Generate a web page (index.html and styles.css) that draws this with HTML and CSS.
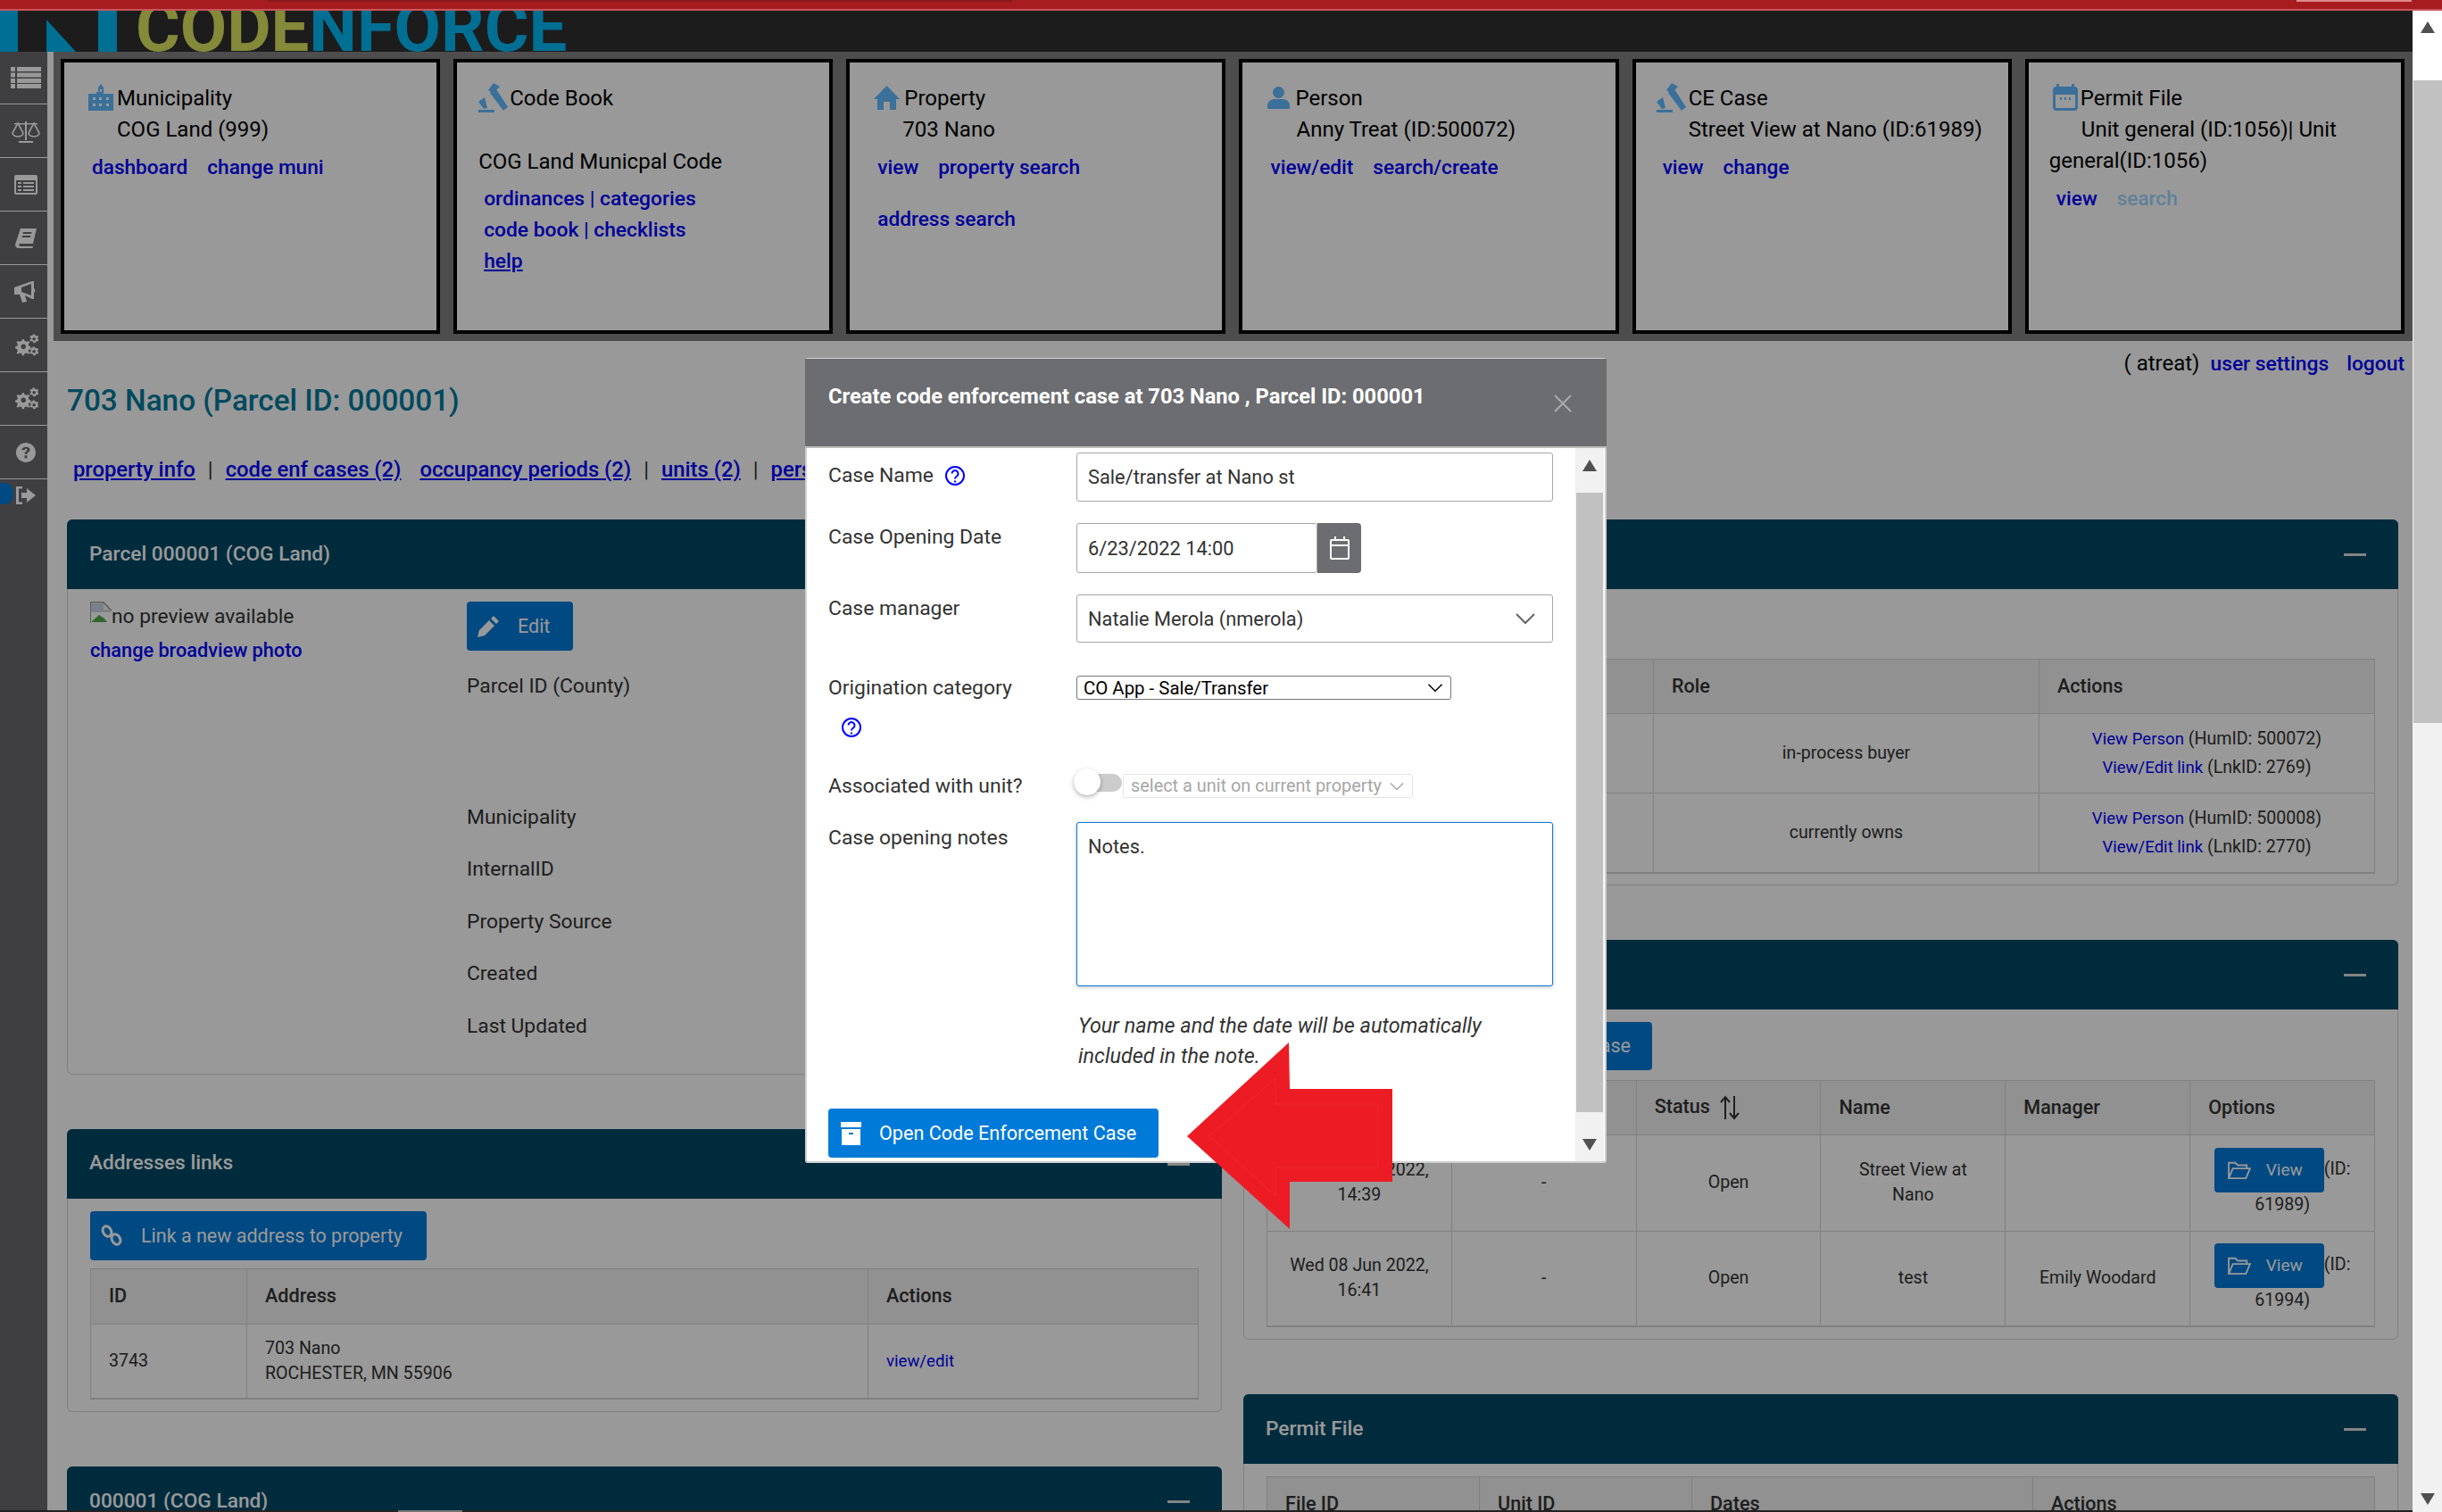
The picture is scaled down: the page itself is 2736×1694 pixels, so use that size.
FILE: index.html
```html
<!DOCTYPE html>
<html lang="en">
<head>
<meta charset="utf-8">
<title>codeNforce</title>
<link rel="stylesheet" href="styles.css">
</head>
<body>
<svg class="defs" width="0" height="0" aria-hidden="true">
  <symbol id="gavel" viewBox="0 0 33 33"><path d="M17 0l7 4-8 8-5-4zM13 11l7-4 13 20-5 4zM0 21l7-5 3 12-4 1zM0 30h18v3H0z"/></symbol>
  <symbol id="cogs" viewBox="0 0 40 36"><path d="M15 8l2 0 1 3 3 1 3-1 2 2-2 3 1 3 3 1v3l-3 1-1 3 2 3-2 2-3-2-3 1-1 3h-3l-1-3-3-1-3 2-2-2 2-3-1-3-3-1v-3l3-1 1-3-2-3 2-2 3 1 3-1zM16 16a4 4 0 1 0 .1 0z" fill-rule="evenodd"/><path d="M31 0h3l1 2 2 1 2-1 1 2-1 2v2l2 1-1 3-2-1-2 1-1 2h-3l-1-2-2-1-2 1-1-3 2-1V6l-2-2 2-2 2 1zM33 5a2.500 2.500 0 1 0 .1 0zM31 20h3l1 2 2 1 2-1 1 2-1 2v2l2 1-1 3-2-1-2 1-1 2h-3l-1-2-2-1-2 1-1-3 2-1v-2l-2-2 2-2 2 1zM33 25a2.500 2.500 0 1 0 .1 0z" fill-rule="evenodd"/></symbol>
  <symbol id="help" viewBox="0 0 24 24"><circle cx="12" cy="12" r="10" fill="none" stroke="currentColor" stroke-width="2"/><path d="M8.500 9.500a3.500 3.500 0 1 1 5.500 3c-1.300.9-2 1.500-2 3M12 17.500v2" fill="none" stroke="currentColor" stroke-width="2"/></symbol>
  <symbol id="folder" viewBox="0 0 30 24"><path d="M2 22V3h8l3 3h11v4M2 22l5-12h21l-5 12z" fill="none" stroke="currentColor" stroke-width="2"/></symbol>
  <symbol id="chev" viewBox="0 0 24 14"><path d="M2 2l10 10L22 2" fill="none" stroke="currentColor" stroke-width="2"/></symbol>
</svg>
<div class="redbar"><span class="red-tab"></span><span class="red-pale"></span></div>
<div class="frame">
  <div class="page">
    <header class="brand">
      <svg class="mark" width="132" height="46" viewBox="0 0 132 46"><path d="M0 0h20v46H0zM52 10l33 36H52zM110 0h21v46h-21z"/></svg>
      <span class="logotext"><span class="olive">CODE</span><span class="blue">NFORCE</span></span>
    </header>
    <div class="layout">
      <nav class="sidebar">
        <div class="side-item"><svg width="34" height="24" viewBox="0 0 34 24"><path d="M0 0h5v5H0zM7 0h27v5H7zM0 6.500h5v5H0zM7 6.500h27v5H7zM0 13h5v5H0zM7 13h27v5H7zM0 19h5v5H0zM7 19h27v5H7z"/></svg></div>
        <div class="side-item"><svg width="32" height="26" viewBox="0 0 32 26"><path d="M15 2h2v21h-2zM8 24h16v2H8zM3 4h26v1.500H3z"/><path d="M7 4L1 15a6 4 0 0 0 12 0zM25 4l-6 11a6 4 0 0 0 12 0z" fill="none" stroke="currentColor" stroke-width="1.600"/></svg></div>
        <div class="side-item"><svg width="26" height="22" viewBox="0 0 26 22"><path d="M2 0h22a2 2 0 0 1 2 2v18a2 2 0 0 1-2 2H2a2 2 0 0 1-2-2V2a2 2 0 0 1 2-2zM2 6v14h22V6zM4 8h4v2H4zM10 8h12v2H10zM4 12h4v2H4zM10 12h12v2H10zM4 16h4v2H4zM10 16h12v2H10z" fill-rule="evenodd"/></svg></div>
        <div class="side-item"><svg width="24" height="22" viewBox="0 0 24 22"><path d="M6 0h18l-4 17H5a2 2 0 0 0 0 3h15l-.5 2H4c-3 0-4-2-4-4zM9 4l-.5 2H18l.5-2zM8 8l-.5 2H17l.5-2z" fill-rule="evenodd"/></svg></div>
        <div class="side-item"><svg width="26" height="24" viewBox="0 0 26 24"><path d="M0 7l20-7h2v8a3 3 0 0 1 0 5v7h-2L12 16l2 7-5 1-3-9H0zM19 3L8 7v5l11 4z" fill-rule="evenodd"/></svg></div>
        <div class="side-item"><svg width="28" height="26"><use href="#cogs"/></svg></div>
        <div class="side-item"><svg width="28" height="26"><use href="#cogs"/></svg></div>
        <div class="side-item"><svg width="22" height="22" viewBox="0 0 24 24"><path d="M12 0a12 12 0 1 1-.1 0zM7 9h3.500c0-2 3-2 3-.3 0 1.700-3 2-3 5.300h3c0-2.500 3.500-2.500 3.500-5.500C17 4 7 4 7 9zM10.500 15.500v3.500h3v-3.500z" fill-rule="evenodd"/></svg></div>
        <div class="side-item side-last"><span class="pill"></span><svg width="22" height="20" viewBox="0 0 22 20"><path d="M7 0v2.500H3v15h4V20H0V0zM12 2l10 8-10 8v-5H6V7h6z"/></svg></div>
      </nav>
      <main class="main">
        <section class="nav-strip">
          <article class="card c1">
            <div class="card-head"><svg class="ci" width="28" height="30" viewBox="0 0 28 30"><path d="M9 9h2V4l3-4 3 4v7h11v19H0V11h9zM5 15v3h3v-3zM12 15v3h3v-3zM20 15v3h3v-3zM5 22v3h3v-3zM12 22v3h3v-3zM20 22v3h3v-3zM13 6v3h2V6z" fill-rule="evenodd"/></svg>Municipality</div>
            <p class="indent-32">COG Land (999)</p>
            <p class="links"><a href="#">dashboard</a><a href="#">change muni</a></p>
          </article>
          <article class="card c2">
            <div class="card-head"><svg class="ci" width="33" height="33"><use href="#gavel"/></svg>Code Book</div>
            <p class="c2-title">COG Land Municpal Code</p>
            <p class="stack"><a href="#">ordinances | categories</a><a href="#">code book | checklists</a><a href="#" class="under">help</a></p>
          </article>
          <article class="card c3">
            <div class="card-head"><svg class="ci" width="29" height="27" viewBox="0 0 29 27"><path d="M14.500 0L29 15h-4v12h-7v-9h-7v9H4V15H0z"/></svg>Property</div>
            <p class="indent-32">703 Nano</p>
            <p class="links"><a href="#">view</a><a href="#">property search</a></p>
            <p class="links links-far"><a href="#">address search</a></p>
          </article>
          <article class="card c4">
            <div class="card-head"><svg class="ci" width="25" height="25" viewBox="0 0 25 25"><ellipse cx="12.500" cy="6.500" rx="6.500" ry="6.500"/><path d="M0 25v-4c0-4 4-7 8-7h9c4 0 8 3 8 7v4z"/></svg>Person</div>
            <p class="indent-32">Anny Treat (ID:500072)</p>
            <p class="links"><a href="#">view/edit</a><a href="#">search/create</a></p>
          </article>
          <article class="card c5">
            <div class="card-head"><svg class="ci" width="33" height="33"><use href="#gavel"/></svg>CE Case</div>
            <p class="indent-32">Street View at Nano (ID:61989)</p>
            <p class="links"><a href="#">view</a><a href="#">change</a></p>
          </article>
          <article class="card c6">
            <div class="card-head"><svg class="ci" width="28" height="30" viewBox="0 0 28 30"><path d="M4 0h3v3h14V0h3v3a4 4 0 0 1 4 4v19a4 4 0 0 1-4 4H4a4 4 0 0 1-4-4V7a4 4 0 0 1 4-4zM3 12v14a1 1 0 0 0 1 1h20a1 1 0 0 0 1-1V12zM8 15h2v3H8zM13 15h2v3h-2zM18 15h2v3h-2z" fill-rule="evenodd"/></svg>Permit File</div>
            <p class="wrap-indent">Unit general (ID:1056)| Unit general(ID:1056)</p>
            <p class="links"><a href="#">view</a><a href="#" class="faded">search</a></p>
          </article>
        </section>
        <div class="content">
          <p class="userline">( atreat)<a href="#">user settings</a><a href="#">logout</a></p>
          <h1 class="title">703 Nano (Parcel ID: 000001)</h1>
          <p class="tabs"><a href="#">property info</a><span>|</span><a href="#">code enf cases (2)</a><a href="#" class="tab-tight">occupancy periods (2)</a><span>|</span><a href="#">units (2)</a><span>|</span><a href="#">persons</a></p>
          <div class="columns">
            <div class="col">
              <section class="panel">
                <header class="panel-head"><span>Parcel 000001 (COG Land)</span></header>
                <div class="panel-body parcel">
                  <div class="parcel-photo">
                    <p class="alt"><svg width="24" height="24" viewBox="0 0 24 24"><path d="M0 0h15l9 9v3H0z" fill="#d8d8d8"/><path d="M15 0v9h9z" fill="#f4f4f4"/><path d="M0 0h15l9 9-1 1-9-9H1v23H0z" fill="#9a9a9a"/><path d="M2 22l8-7 6 4 3 4H2z" fill="#58a84a"/><path d="M2 3h10v8H2z" fill="#c5d8f0"/></svg>no preview available</p>
                    <a href="#" class="link-med">change broadview photo</a>
                  </div>
                  <div class="parcel-info">
                    <a href="#" class="btn btn-edit"><svg width="24" height="24" viewBox="0 0 24 24"><path d="M18 0l6 6-3 3-6-6zM13 5l6 6L8 22l-8 2 2-8z" fill="currentColor"/></svg>Edit</a>
                    <p class="field field-tall">Parcel ID (County)</p>
                    <p class="field">Municipality</p>
                    <p class="field">InternalID</p>
                    <p class="field">Property Source</p>
                    <p class="field">Created</p>
                    <p class="field">Last Updated</p>
                  </div>
                </div>
              </section>
              <section class="panel">
                <header class="panel-head"><span>Addresses links</span><i class="minus"></i></header>
                <div class="panel-body addr">
                  <a href="#" class="btn btn-link"><svg width="24" height="24" viewBox="0 0 24 24"><ellipse cx="7" cy="7.500" rx="4.500" ry="6" transform="rotate(-30 7 7.500)" fill="none" stroke="currentColor" stroke-width="3"/><ellipse cx="17" cy="16.500" rx="4.500" ry="6" transform="rotate(-30 17 16.500)" fill="none" stroke="currentColor" stroke-width="3"/></svg>Link a new address to property</a>
                  <table class="tbl tbl-addr">
                    <thead><tr><th class="w175">ID</th><th class="w696">Address</th><th>Actions</th></tr></thead>
                    <tbody><tr class="h84"><td>3743</td><td>703 Nano<br>ROCHESTER, MN 55906</td><td><a href="#">view/edit</a></td></tr></tbody>
                  </table>
                </div>
              </section>
              <section class="panel">
                <header class="panel-head"><span>000001 (COG Land)</span><i class="minus"></i></header>
              </section>
            </div>
            <div class="col">
              <section class="panel">
                <header class="panel-head"><span></span><i class="minus"></i></header>
                <div class="panel-body persons">
                  <table class="tbl tbl-persons">
                    <thead><tr><th class="w433"></th><th class="w432">Role</th><th>Actions</th></tr></thead>
                    <tbody>
                      <tr class="h89"><td></td><td class="center">in-process buyer</td><td class="center"><a href="#">View Person</a> (HumID: 500072)<br><a href="#">View/Edit link</a> (LnkID: 2769)</td></tr>
                      <tr class="h89"><td></td><td class="center">currently owns</td><td class="center"><a href="#">View Person</a> (HumID: 500008)<br><a href="#">View/Edit link</a> (LnkID: 2770)</td></tr>
                    </tbody>
                  </table>
                </div>
              </section>
              <section class="panel">
                <header class="panel-head"><span></span><i class="minus"></i></header>
                <div class="panel-body cases">
                  <a href="#" class="btn btn-case">Open new case</a>
                  <table class="tbl tbl-cases">
                    <thead><tr><th></th><th></th><th>Status <svg class="sort" width="26" height="28" viewBox="0 0 26 28"><path d="M8 27V3M3 8l5-6 5 6M18 1v24M13 20l5 6 5-6" fill="none" stroke="currentColor" stroke-width="2"/></svg></th><th>Name</th><th>Manager</th><th>Options</th></tr></thead>
                    <tbody>
                      <tr class="h108"><td class="center">Wed 22 Jun 2022,<br>14:39</td><td class="center">-</td><td class="center">Open</td><td class="center">Street View at<br>Nano</td><td></td><td class="center opt"><a href="#" class="btn btn-view"><svg width="28" height="22"><use href="#folder"/></svg>View</a>(ID: 61989)</td></tr>
                      <tr class="h107"><td class="center">Wed 08 Jun 2022,<br>16:41</td><td class="center">-</td><td class="center">Open</td><td class="center">test</td><td class="center">Emily Woodard</td><td class="center opt"><a href="#" class="btn btn-view"><svg width="28" height="22"><use href="#folder"/></svg>View</a>(ID: 61994)</td></tr>
                    </tbody>
                  </table>
                </div>
              </section>
              <section class="panel">
                <header class="panel-head"><span>Permit File</span><i class="minus"></i></header>
                <div class="panel-body permits">
                  <table class="tbl tbl-permits">
                    <thead><tr><th class="w238">File ID</th><th class="w238">Unit ID</th><th class="w382">Dates</th><th>Actions</th></tr></thead>
                  </table>
                </div>
              </section>
            </div>
          </div>
        </div>
      </main>
    </div>
    <div class="dim"></div>
    <div class="hbar"><span></span></div>
    <section class="modal">
      <header class="modal-head">
        <h2>Create code enforcement case at 703 Nano , Parcel ID: 000001</h2>
        <svg class="close" width="20" height="20" viewBox="0 0 20 20"><path d="M1 1l18 18M19 1L1 19" stroke="currentColor" stroke-width="2"/></svg>
      </header>
      <div class="modal-body">
        <form class="form">
          <div class="row r-name"><label class="lab lab-pad">Case Name <svg class="q q-inline" width="24" height="24"><use href="#help"/></svg></label><input class="inp inp-full" value="Sale/transfer at Nano st"></div>
          <div class="row r-date"><label class="lab lab-up">Case Opening Date</label><input class="inp inp-date" value="6/23/2022 14:00"><span class="cal"><svg width="22" height="26" viewBox="0 0 22 26"><path d="M6 0v5M16 0v5M2 4h18a1 1 0 0 1 1 1v19a1 1 0 0 1-1 1H2a1 1 0 0 1-1-1V5a1 1 0 0 1 1-1zM1 10h20" fill="none" stroke="currentColor" stroke-width="2"/></svg></span></div>
          <div class="row r-mgr"><label class="lab lab-up">Case manager</label><div class="fake-select">Natalie Merola (nmerola)<svg width="24" height="14"><use href="#chev"/></svg></div></div>
          <div class="row r-orig"><label class="lab">Origination category<svg class="q q-block" width="24" height="24"><use href="#help"/></svg></label><div class="sel-wrap"><select class="sel"><option>CO App - Sale/Transfer</option></select><svg class="sel-chev" width="18" height="11"><use href="#chev"/></svg></div></div>
          <div class="row r-unit"><label class="lab">Associated with unit?</label><span class="toggle"><i></i></span><div class="unit-select">select a unit on current property<svg width="18" height="10"><use href="#chev"/></svg></div></div>
          <div class="row r-notes"><label class="lab">Case opening notes</label><textarea class="inp notes">Notes.</textarea></div>
          <p class="note">Your name and the date will be automatically<br>included in the note.</p>
          <a href="#" class="btn btn-open"><svg width="23" height="26" viewBox="0 0 23 26"><path d="M0 0h23v6H0zM1 8h21v18H1zM9 12v2h5v-2z" fill-rule="evenodd"/></svg>Open Code Enforcement Case</a>
        </form>
        <div class="mscroll"><span class="tri up"></span><span class="mthumb"></span><span class="tri down"></span></div>
      </div>
    </section>
    <svg class="arrow" width="232" height="209" viewBox="0 0 232 209"><path d="M0 105L114 0l1 52h115v104H115v53z" fill="#ed1c24"/><path d="M25 105L99 40v29h115v71H99v32z" fill="none" stroke="#f0262e" stroke-width="1"/></svg>
  </div>
  <aside class="vscroll"><span class="tri up"></span><span class="vthumb"></span><span class="tri down"></span></aside>
</div>
</body>
</html>
```
FILE: styles.css
```css
* { box-sizing: border-box; }
html, body { margin: 0; height: 100%; }
body { width: 2736px; height: 1694px; overflow: hidden; background: #fff; color: #333; font: 400 24px/35px Roboto, "Liberation Sans", sans-serif; }
p, h1, h2 { margin: 0; }
a { color: #00f; text-decoration: none; }
.defs { position: absolute; }
.redbar { position: relative; height: 12px; background: #a61c1f; border-bottom: 2px solid #c9555a; }
.red-tab { position: absolute; left: 300px; top: 0; width: 834px; height: 2px; background: #8a1a1c; }
.red-pale { position: absolute; left: 2573px; top: 0; width: 129px; height: 2px; background: #e08a8a; }
.frame { display: flex; height: 1682px; }
.page { position: relative; width: 2703px; height: 1682px; overflow: hidden; }
.brand { position: relative; height: 46px; background: #2f2f2f; overflow: hidden; display: flex; }
.mark { fill: #00b9f7; flex: none; }
.logotext { margin: -4px 0 0 20px; font: 700 76px/46px Roboto, sans-serif; white-space: nowrap; }
.olive { color: #dce65f; }
.blue { color: #00b9f7; }
.layout { display: flex; height: 1636px; }
.sidebar { width: 53px; flex: none; background: #69696d; color: #fff; fill: #fff; }
.side-item { position: relative; height: 60px; display: flex; align-items: center; justify-content: center; border-bottom: 1px solid #fff; padding-left: 4px; }
.side-item:first-child { height: 59px; }
.side-last { border-bottom: 0; height: 36px; }
.pill { position: absolute; left: 0; top: 4px; width: 15px; height: 24px; border-radius: 0 10px 10px 0; background: #007ad9; }
.main { flex: 1; min-width: 0; }
.nav-strip { margin-left: 7px; height: 324px; background: #808080; padding: 8px 9px 8px 8px; display: grid; grid-template-columns: repeat(6, 1fr); gap: 15px; }
.card { border: 4px solid #000; background: #fff; color: #000; padding-top: 23px; min-width: 0; }
.c1 { padding-left: 27px; } .c2 { padding-left: 24px; } .c3 { padding-left: 27px; } .c4 { padding-left: 28px; } .c5 { padding-left: 23px; } .c6 { padding-left: 27px; }
.card-head { display: flex; align-items: center; height: 35px; gap: 3px; }
.c2 .card-head { gap: 2px; }
.c1 .card-head { gap: 4px; }
.c3 .card-head { gap: 5px; }
.c4 .card-head { gap: 6px; }
.ci { fill: #61bbff; flex: none; margin-top: -3px; }
.indent-32 { padding-left: 32px; }
.c5 .indent-32 { padding-left: 36px; }
.c2-title { margin-top: 36px; }
.links { margin: 7px 0 0 4px; font-weight: 500; font-size: 22.600px; display: flex; gap: 22px; }
.links-far { margin-top: 23px; }
.c4 .links { margin-left: 3px; }
.c5 .links { margin-left: 7px; }
.stack { margin: 6px 0 0 6px; font-weight: 500; font-size: 22.800px; display: flex; flex-direction: column; }
.under { text-decoration: underline; }
.wrap-indent { text-indent: 36px; margin-left: -4px; width: 350px; }
.faded { color: #9fd7ff; }
.content { padding: 7px 16px 0 22px; }
.userline { display: flex; justify-content: flex-end; gap: 12px; margin: 1px -7px 0 0; color: #000; height: 35px; }
.userline a { font-weight: 500; font-size: 22.800px; }
.userline a:last-child { margin-left: 8px; }
.title { font: 500 33.300px/48px Roboto, sans-serif; color: #007b9d; }
.tabs { margin: 36px 0 0 7px; display: flex; height: 38px; gap: 14px; font-weight: 500; font-size: 23.800px; color: #333; }
.tabs a { text-decoration: underline; }
.tabs span { font-weight: 400; }
.tab-tight { margin-left: 7px; }
.columns { display: grid; grid-template-columns: 1294px 1294px; gap: 24px; margin-top: 35px; }
.col { display: flex; flex-direction: column; gap: 61px; min-width: 0; }
.panel { border: 1px solid #d5d5d5; border-radius: 6px; font-size: 22.800px; }
.panel-head { height: 78px; margin: -1px -1px 0; background: #004866; border-radius: 6px 6px 0 0; color: #fff; font-size: 22.700px; font-weight: 500; display: flex; align-items: center; justify-content: space-between; padding: 0 35px 2px 25px; position: relative; }
.minus { position: absolute; right: 36px; top: 38px; width: 25px; height: 3px; background: #ddd; }
.panel-body { padding: 0 25px; }
.parcel { display: flex; padding-bottom: 13px; }
.parcel-photo { width: 422px; flex: none; padding-top: 8px; }
.alt { display: flex; height: 38px; align-items: flex-end; line-height: 30px; }
.alt svg { flex: none; margin-bottom: 8px; }
.link-med { display: block; font-weight: 500; margin-top: 5px; font-size: 21.700px; }
.parcel-info { padding-top: 14px; }
.btn { display: inline-flex; align-items: center; background: #007ad9; color: #fff; border-radius: 4px; }
.btn-edit { display: flex; width: 119px; height: 55px; padding-left: 12px; gap: 21px; font-size: 21.500px; }
.field { height: 58.400px; line-height: 35px; }
.field-tall { margin-top: 22px; height: 147px; }
.addr { padding: 14px 25px 13px; }
.btn-link { display: flex; width: 377px; height: 55px; padding-left: 12px; gap: 21px; font-size: 21.500px; white-space: nowrap; }
.tbl { border-collapse: collapse; table-layout: fixed; width: 100%; font-size: 19.600px; line-height: 28px; border-bottom: 2px solid #d5d5d5; }
.tbl th, .tbl td { border: 1px solid #d5d5d5; padding: 0 20px; text-align: left; }
.tbl th { height: 61px; background: #f2f2f2; font-size: 21.600px; font-weight: 500; color: #333; }
.tbl td a { color: #00f; font-size: 18.600px; }
.tbl-addr { margin-top: 9px; }
.tbl-addr th { height: 62px; }
.tbl-persons td { line-height: 32px; }
.center { text-align: center !important; }
.w175 { width: 175px; } .w696 { width: 696px; } .w433 { width: 433px; } .w432 { width: 432px; } .w238 { width: 238px; } .w382 { width: 382px; }
.h84 { height: 84px; } .h89 { height: 89px; } .h108 { height: 108px; } .h107 { height: 107px; }
.persons { padding: 78px 25px 12px; }
.cases { padding: 14px 25px 13px; }
.btn-case { display: flex; width: 432px; height: 54px; justify-content: flex-end; padding-right: 24px; font-size: 21.500px; }
.tbl-cases { margin-top: 11px; }
.tbl-cases td { padding: 0 14px; }
.opt { padding: 0 14px !important; }
.sort { vertical-align: middle; margin-left: 4px; }
.tbl td a.btn-view { width: 123px; height: 50px; padding-left: 14px; gap: 16px; vertical-align: middle; color: #fff; font-size: 19px; }
.permits { padding: 14px 25px 0; }
.dim { position: absolute; inset: 0; background: rgba(0, 0, 0, .4); }
.hbar { position: absolute; left: 0; right: 0; bottom: 0; height: 2px; background: #222; }
.hbar span { position: absolute; left: 446px; width: 72px; height: 2px; background: #777; }
.modal { position: absolute; left: 902px; top: 389px; width: 898px; height: 902px; border: 2px solid #cfcfcf; border-radius: 3px; background: #fff; color: #333; }
.modal-head { height: 100px; margin: -1px -2px 0; background: #6c6d71; border-bottom: 2px solid #bdbdbd; position: relative; color: #fff; padding: 25px 26px 0; }
.modal-head h2 { font: 700 23.700px/35px Roboto, sans-serif; }
.close { position: absolute; right: 39px; top: 40px; color: #ababab; }
.modal-body { display: flex; height: 799px; }
.form { flex: 1; min-width: 0; padding: 5px 25px 0 24px; font-size: 22.900px; }
.row { display: flex; align-items: flex-start; }
.lab { width: 278px; flex: none; color: #333; }
.lab-pad { padding-top: 8px; display: flex; align-items: center; gap: 12px; }
.lab-up { margin-top: -2px; }
.r-date { margin-top: 24px; }
.r-mgr { margin-top: 24px; }
.r-orig { margin-top: 33px; height: 108px; }
.r-unit { height: 33px; }
.r-unit .lab { padding-top: 2px; }
.r-notes { margin-top: 27px; }
.inp { border: 1px solid #a6a6a6; border-radius: 3px; font: 400 21.800px/30px Roboto, sans-serif; color: #333; padding: 0 12px; background: #fff; margin: 0; outline: 0; }
.inp-full { width: 534px; height: 55px; }
.inp-date { width: 270px; height: 56px; }
.cal { width: 49px; height: 56px; background: #6c6d71; color: #fff; border-radius: 0 4px 4px 0; display: flex; align-items: center; justify-content: center; }
.fake-select { width: 534px; height: 54px; border: 1px solid #a6a6a6; border-radius: 3px; font-size: 21.800px; display: flex; align-items: center; justify-content: space-between; padding: 0 18px 0 12px; }
.fake-select svg { color: #666; }
.q { color: #00f; flex: none; }
.q-block { display: block; margin: 15px 0 0 14px; }
.sel-wrap { position: relative; width: 420px; height: 27px; margin-top: 4px; }
.sel { appearance: none; display: block; width: 420px; height: 27px; padding: 0 0 0 7px; font: 400 20.400px Roboto, sans-serif; color: #000; background: #fff; border: 1px solid #767676; border-radius: 3px; }
.sel-chev { position: absolute; right: 9px; top: 8px; color: #000; }
.toggle { position: relative; width: 54px; height: 20px; margin: 6px 0 0 -3px; background: #ccc; border-radius: 10px; flex: none; }
.toggle i { position: absolute; left: 0; top: -6px; width: 30px; height: 30px; border-radius: 50%; background: #fff; box-shadow: 0 2px 5px rgba(0,0,0,.3); }
.unit-select { width: 325px; height: 27px; margin: 6px 0 0 1px; border: 1px solid #e4e4e4; border-radius: 3px; font-size: 19.900px; line-height: 25px; color: #a6a6a6; display: flex; align-items: center; justify-content: space-between; padding: 0 8px; white-space: nowrap; }
.notes { width: 534px; height: 184px; border-color: #0a7ad1; padding-top: 12px; resize: none; box-shadow: 0 1px 4px rgba(0,0,0,.25); display: block; }
.note { margin: 27px 0 0 280px; font-size: 23.400px; font-style: italic; line-height: 34px; }
.btn-open { width: 370px; height: 55px; margin-top: 42px; padding-left: 14px; gap: 20px; font-size: 21.600px; white-space: nowrap; }
.btn-open svg { fill: #fff; }
.mscroll { position: relative; width: 32px; background: #f1f1f1; margin-right: 1px; flex: none; }
.mthumb { position: absolute; left: 1px; right: 1px; top: 50px; height: 694px; background: #c1c1c1; }
.tri { position: absolute; left: 50%; margin-left: -8px; width: 0; height: 0; border-left: 8px solid transparent; border-right: 8px solid transparent; }
.tri.up { top: 13px; border-bottom: 13px solid #505050; }
.tri.down { bottom: 12px; border-top: 13px solid #505050; }
.arrow { position: absolute; left: 1330px; top: 1156px; }
.vscroll { position: relative; width: 33px; flex: none; background: #f1f1f1; }
.vscroll::before { content: ""; position: absolute; left: 0; right: 0; top: 0; height: 78px; background: #fff; }
.vthumb { position: absolute; left: 1px; right: 0; top: 78px; height: 720px; background: #c1c1c1; }
.vscroll .tri.up { top: 12px; }
.vscroll .tri.down { bottom: 8px; }
```
